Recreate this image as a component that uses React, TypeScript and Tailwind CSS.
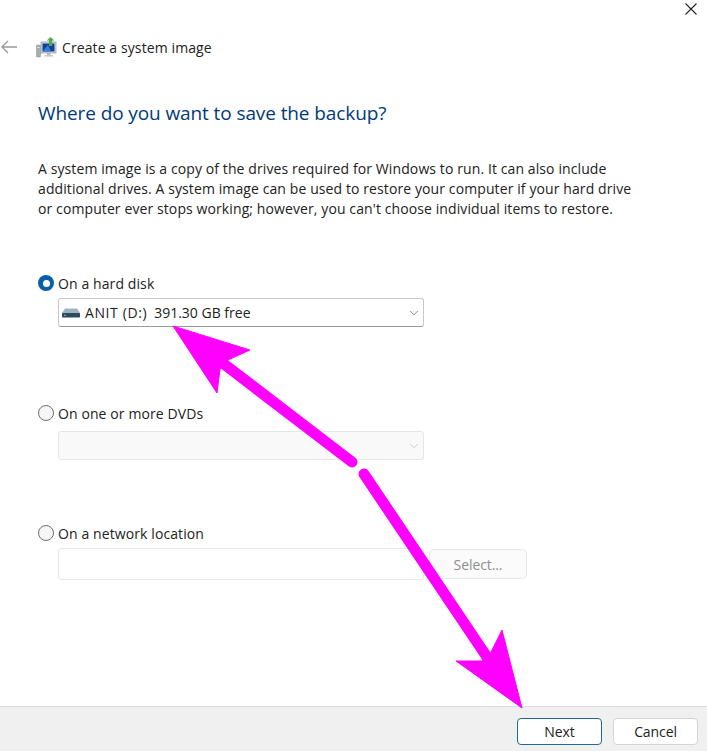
import { ChevronDown } from 'lucide-react'

const font = "font-['Open_Sans','Noto_Sans',sans-serif]"

function Radio({ checked = false, label }: { checked?: boolean; label: string }) {
  return (
    <div className="flex h-5 items-center">
      {checked ? (
        <span className="ml-[38px] flex size-4 items-center justify-center rounded-full bg-[#0a5ea8]">
          <span className="size-[7px] rounded-full bg-white" />
        </span>
      ) : (
        <span className="ml-[38px] size-4 rounded-full border border-[#6e6e6e] bg-[#f6f6f6]" />
      )}
      <span className="ml-1 text-[14px] tracking-[0.1px] text-[#222]">{label}</span>
    </div>
  )
}

function SystemImageIcon() {
  return (
    <svg width="21" height="21" viewBox="0 0 21 21" className="mr-[5px]">
      <rect x="0.5" y="8" width="4" height="12" rx="0.5" fill="#a9adad" stroke="#8a8f8f" strokeWidth="0.5" />
      <rect x="1.5" y="10" width="2" height="1" fill="#e8e8e8" />
      <rect x="5" y="5" width="15" height="11" fill="#d7dadd" stroke="#8f979e" strokeWidth="0.7" />
      <rect x="6.5" y="6.5" width="12" height="8" fill="#123f9a" />
      <path d="M6.5 14.5 L12 8 L15 14.5 Z" fill="#2f7fd6" />
      <rect x="11" y="16" width="3.5" height="2" fill="#b4b9bc" />
      <rect x="8.5" y="18" width="8.5" height="1.6" fill="#c7cbce" />
      <path d="M13 7 V3.5 H10.8 L14.6 0 L18.4 3.5 H16.2 V9 H13 Z" fill="#4fae4a" />
    </svg>
  )
}

function DiskIcon() {
  return (
    <svg width="18" height="10" viewBox="0 0 18 10" className="mr-[5px] shrink-0">
      <path d="M3 0.5 H15 L18 5 H0 Z" fill="#9fb4c2" />
      <rect x="0" y="5" width="18" height="4.5" rx="0.8" fill="#2c4a5e" />
      <rect x="2" y="6.8" width="2" height="1" fill="#6fc0e0" />
    </svg>
  )
}

// the two hand drawn annotation arrows lying over the dialog
function Arrows() {
  return (
    <svg width="707" height="751" viewBox="0 0 707 751" className="pointer-events-none absolute inset-0">
      <g fill="#ff00ff" stroke="#ff00ff" strokeLinejoin="round">
        <path d="M173 326 L250 350 L228 360 L220 369 L217 393 Z" strokeWidth="1" />
        <path d="M224 364 L352 462" fill="none" strokeWidth="11" strokeLinecap="round" />
        <path d="M364 474 L487 657" fill="none" strokeWidth="11" strokeLinecap="round" />
        <path d="M522 708 L456 661 L482 661 L490 654 L502 630 Z" strokeWidth="1" />
      </g>
    </svg>
  )
}

export default function App() {
  return (
    <div className={`relative flex h-[751px] w-[707px] flex-col overflow-hidden bg-white ${font}`}>
      <div className="flex justify-end pr-[10px] pt-[3px]">
        <svg width="12" height="12" viewBox="0 0 12 12">
          <path d="M0.5 0.5 L11.5 11.5 M11.5 0.5 L0.5 11.5" stroke="#222" strokeWidth="1.1" fill="none" />
        </svg>
      </div>

      <div className="mt-[20px] flex h-[24px] items-center">
        <svg width="17" height="14" viewBox="0 0 17 14" className="ml-[1px] mr-[18px]">
          <path d="M16 7 H1 M7 1 L1 7 L7 13" stroke="#9a9a9a" strokeWidth="1.3" fill="none" />
        </svg>
        <SystemImageIcon />
        <span className="text-[14px] tracking-[0.1px] text-[#222]">Create a system image</span>
      </div>

      <h1 className="ml-[38px] mt-[40px] text-[19px] leading-[28px] font-normal tracking-[-0.1px] text-[#003a7d]">
        Where do you want to save the backup?
      </h1>

      <p className="ml-[38px] mt-[32px] w-[640px] text-[14px] leading-[20px] tracking-[0.1px] text-[#222]">
        A system image is a copy of the drives required for Windows to run. It can also include
        <br />
        additional drives. A system image can be used to restore your computer if your hard drive
        <br />
        or computer ever stops working; however, you can't choose individual items to restore.
      </p>

      <div className="mt-[54px]">
        <Radio checked label="On a hard disk" />
      </div>
      <div className="ml-[58px] mt-[5px] flex h-[29px] w-[366px] items-center rounded-[3px] border border-[#c8c8c8] border-b-[#9a9a9a] bg-white pl-[3px] pr-[2px]">
        <DiskIcon />
        <span className="text-[14px] tracking-[0.6px] text-[#222]">ANIT (D:)</span>
        <span className="ml-[7px] text-[14px] text-[#222]">391.30 GB free</span>
        <ChevronDown className="ml-auto size-[14px] text-[#555]" strokeWidth={1.25} />
      </div>

      <div className="mt-[76px]">
        <Radio label="On one or more DVDs" />
      </div>
      <div className="ml-[58px] mt-[8px] flex h-[29px] w-[366px] items-center justify-end rounded-[3px] border border-[#e6e6e6] bg-[#f9f9f9] pr-[2px]">
        <ChevronDown className="size-[14px] text-[#bdbdbd]" strokeWidth={1.25} />
      </div>

      <div className="mt-[63px]">
        <Radio label="On a network location" />
      </div>
      <div className="ml-[58px] mt-[5px] flex items-center">
        <div className="h-[32px] w-[366px] rounded-[3px] border border-[#e8e8e8] bg-white" />
        <div className="ml-[5px] flex h-[30px] w-[98px] items-center justify-center rounded-[4px] border border-[#e8e8e8] bg-[#fbfbfb] text-[14px] tracking-[-0.1px] text-[#8e8e8e]">
          Select...
        </div>
      </div>

      <div className="mt-auto flex h-[45px] justify-end gap-[11px] border-t border-[#dcdcdc] bg-[#f0f0f0] pr-[9px] pt-[11px]">
        <button className="h-[27px] w-[85px] rounded-[4px] border border-[#1f6a8e] bg-white text-[14px] tracking-[-0.1px] text-[#222]">
          Next
        </button>
        <button className="h-[27px] w-[85px] rounded-[4px] border border-[#d4d4d4] bg-white text-[14px] tracking-[-0.1px] text-[#222]">
          Cancel
        </button>
      </div>

      <Arrows />
    </div>
  )
}
